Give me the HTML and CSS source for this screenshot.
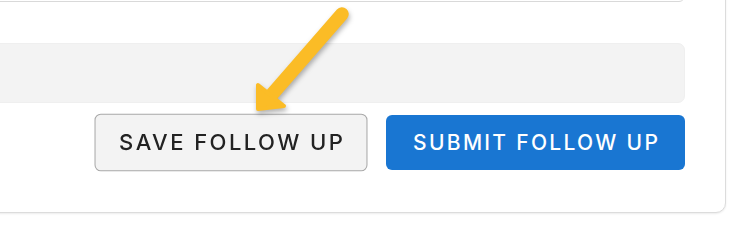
FILE: index.html
```html
<!DOCTYPE html>
<html>
<head>
<meta charset="utf-8">
<link rel="stylesheet" href="styles.css">
</head>
<body>
<div class="card">
  <div class="field"></div>
  <div class="textarea"></div>
  <div class="actions">
    <button class="btn btn-save">SAVE FOLLOW UP</button>
    <button class="btn btn-submit">SUBMIT FOLLOW UP</button>
  </div>
</div>
<svg class="arrow" width="750" height="242" viewBox="0 0 750 242">
  <g fill="#fbbc26" stroke="#fbbc26" stroke-linecap="round" stroke-linejoin="round">
    <line x1="342" y1="14" x2="268" y2="99" stroke-width="13.5"/>
    <polygon points="258,85 258,109 284,106" stroke-width="4"/>
  </g>
</svg>
</body>
</html>
```
FILE: styles.css
```css
html, body {
  margin: 0;
  padding: 0;
  background: #ffffff;
  overflow: hidden;
}
body {
  width: 750px;
  height: 242px;
  position: relative;
  font-family: "Inter", "Noto Sans", sans-serif;
}
.card {
  box-sizing: border-box;
  width: 806px;
  margin: -60px 0 0 -80px;
  border: 1px solid #dcdcdc;
  border-radius: 10px;
  box-shadow: 0 1px 2px rgba(0, 0, 0, 0.08);
  padding: 21px 40px 42px 40px;
  background: #fff;
}
.field {
  box-sizing: border-box;
  height: 40px;
  border: 1px solid #d9d9d9;
  border-radius: 6px;
  background: #fff;
}
.textarea {
  box-sizing: border-box;
  margin-top: 41px;
  height: 60px;
  border: 1px solid #efefef;
  border-radius: 7px;
  background: #f3f3f3;
}
.actions {
  display: flex;
  justify-content: flex-end;
  align-items: center;
  gap: 25px;
  margin-top: 12px;
}
.btn {
  box-sizing: border-box;
  height: 55px;
  border-radius: 6px;
  font-family: "Inter", "Noto Sans", sans-serif;
  font-weight: 500;
  font-size: 21px;
  letter-spacing: 2.3px;
  padding: 0 0 0 2.3px;
  cursor: pointer;
}
.btn-save {
  width: 260px;
  border: 1px solid #a9a9a9;
  background: #f3f3f3;
  color: #222;
  transform: scale(1.05);
}
.btn-submit {
  width: 299px;
  border: none;
  background: #1976d2;
  color: #fff;
}
.arrow {
  position: absolute;
  left: 0;
  top: 0;
  pointer-events: none;
  filter: drop-shadow(1px 3px 2.5px rgba(0, 0, 0, 0.3));
}
```
